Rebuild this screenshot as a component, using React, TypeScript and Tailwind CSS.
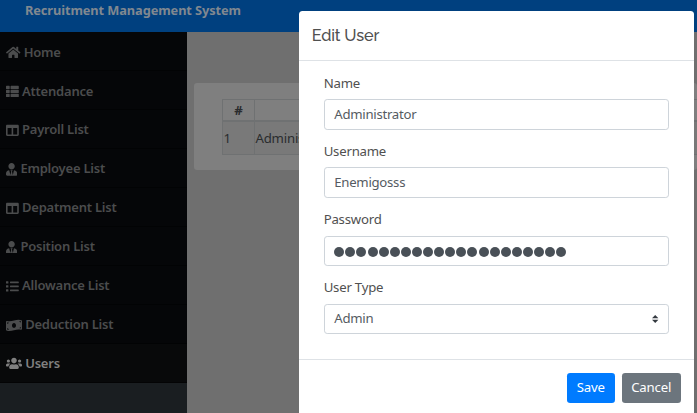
import React from "react";
import {
  FaHome,
  FaThList,
  FaColumns,
  FaUserTie,
  FaList,
  FaMoneyBillWave,
  FaUsers,
} from "react-icons/fa";
import type { IconType } from "react-icons";

const navItems: { label: string; icon: IconType; size: string; active?: boolean }[] = [
  { label: "Home", icon: FaHome, size: "w-[14.5px]" },
  { label: "Attendance", icon: FaThList, size: "w-[12.8px]" },
  { label: "Payroll List", icon: FaColumns, size: "w-[12.8px]" },
  { label: "Employee List", icon: FaUserTie, size: "w-[11.2px]" },
  { label: "Depatment List", icon: FaColumns, size: "w-[12.8px]" },
  { label: "Position List", icon: FaUserTie, size: "w-[11.2px]" },
  { label: "Allowance List", icon: FaList, size: "w-[12.8px]" },
  { label: "Deduction List", icon: FaMoneyBillWave, size: "w-[16px]" },
  { label: "Users", icon: FaUsers, size: "w-[16px]", active: true },
];

function Sidebar() {
  return (
    <nav className="w-[187.4px] shrink-0 bg-[#1a1e21] pt-[0.4px]">
      {navItems.map(({ label, icon: Icon, size, active }) => (
        <a
          key={label}
          className={`flex h-[38.95px] items-center gap-[3.2px] border-b border-black/50 pt-[2px] pl-[6px] text-[13px] font-semibold ${
            active ? "bg-[#08090a] text-[#808080]" : "bg-[#050608] text-[#4b4c4d]"
          }`}
        >
          <Icon className={`h-[12.8px] shrink-0 ${size}`} />
          <span className="tracking-[-0.22px] whitespace-nowrap">{label}</span>
        </a>
      ))}
    </nav>
  );
}

function UserTable() {
  return (
    <div className="mt-[51px] ml-[7px] h-[87px] rounded-[3px] bg-[#7f7f7f] pt-[16px] pl-[27.5px] text-[13.2px] tracking-[-0.2px] text-[#2a2c2e]">
      <div className="border border-r-0 border-[#6f7172]">
        <div className="flex h-[22px] border-b-2 border-[#6f7172]">
          <div className="w-[32px] border-r border-[#6f7172] text-center leading-[21px] font-bold">#</div>
        </div>
        <div className="flex h-[32px] bg-[#797979] leading-[32px]">
          <div className="w-[32px] border-r border-[#6f7172] pl-[0.5px]">1</div>
          <div className="pl-[0.6px]">Administrator</div>
        </div>
      </div>
    </div>
  );
}

function Field({ label, children }: { label: string; children: React.ReactNode }) {
  return (
    <div className="h-[68.2px]">
      <div className="mb-[6.3px] h-[19.2px] text-[13.2px] leading-[19.2px] tracking-[-0.22px] text-[#505050]">{label}</div>
      <div className="flex h-[30.4px] items-center rounded-[3.2px] border border-[#ced4da] px-[9.6px] text-[13.2px] tracking-[-0.28px] text-[#555b62]">
        {children}
      </div>
    </div>
  );
}

function EditUserModal() {
  return (
    <div className="absolute top-[11px] left-[299px] h-[420px] w-[395px] rounded-[3.5px] bg-white">
      <div className="flex h-[50px] items-center border-b border-[#dee2e6] pt-[1px] pl-[12.8px] font-[Raleway,Lato,sans-serif] text-[16.2px] font-medium tracking-[-0.15px] text-[#505050]">
        Edit User
      </div>
      <div className="h-[298.5px] border-b border-[#dee2e6] px-[24.7px] pt-[12.8px]">
        <Field label="Name">Administrator</Field>
        <Field label="Username">Enemigosss</Field>
        <Field label="Password">
          <div className="mt-[3px] flex gap-[1.1px]">
            {Array.from({ length: 21 }, (_, i) => (
              <span key={i} className="h-[10px] w-[10px] rounded-full bg-[#495057]" />
            ))}
          </div>
        </Field>
        <Field label="User Type">
          <span className="grow">Admin</span>
          <svg viewBox="0 0 4 5" className="h-[8px] w-[6.4px]">
            <path fill="#343a40" d="M2 0L0 2h4zm0 5L0 3h4z" />
          </svg>
        </Field>
      </div>
      <div className="flex justify-end gap-[6.6px] pt-[13px] pr-[13px] text-[13.2px] tracking-[-0.15px] text-white">
        <button className="h-[30.4px] w-[48.3px] rounded-[3.2px] bg-[#007bff]">Save</button>
        <button className="h-[30.4px] w-[59.5px] rounded-[3.2px] bg-[#6c757d]">Cancel</button>
      </div>
    </div>
  );
}

export default function App() {
  return (
    <div className="relative flex h-[413px] w-[697px] flex-col overflow-hidden bg-[#6f6f6f] font-['Noto_Sans','Open_Sans',sans-serif]">
      <header className="h-[32px] shrink-0 bg-[#00407f] pl-[25px] text-[12.8px] leading-[20px] font-bold tracking-[-0.09px] text-[#808890]">
        Recruitment Management System
      </header>
      <div className="flex grow">
        <Sidebar />
        <main className="grow">
          <UserTable />
        </main>
      </div>
      <EditUserModal />
    </div>
  );
}
